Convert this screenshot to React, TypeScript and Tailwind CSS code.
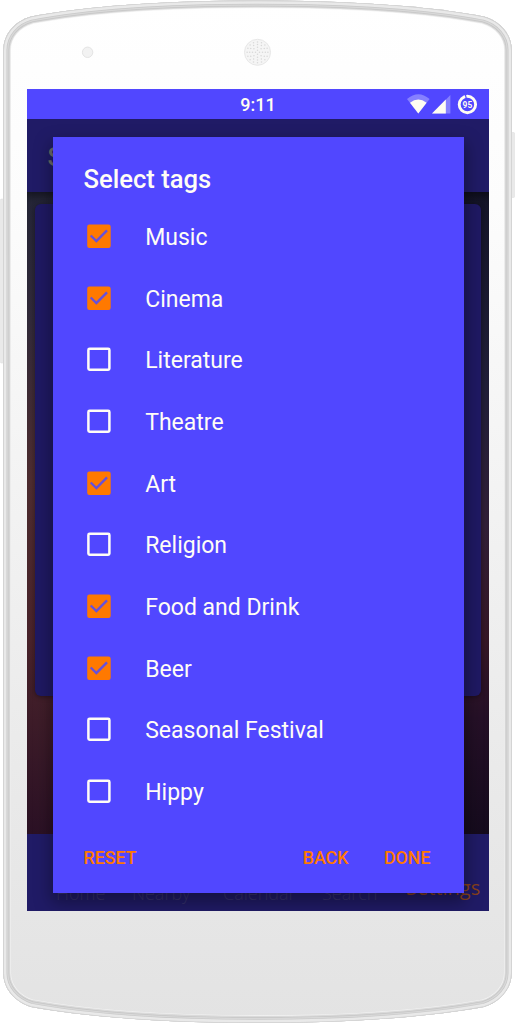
import React from "react";

const BODY =
  "M3.3 50 C3.3 34 15 21 31 16.5 C88 5.5 170 .5 257.5 .5 C345 .5 427 5.5 484 16.5 C500 21 511.7 34 511.7 50 V973 C511.7 989 500 1002 484 1007 C427 1017.5 345 1023 257.5 1023 C170 1023 88 1017.5 31 1007 C15 1002 3.3 989 3.3 973 Z";

const tags = [
  { name: "Music", checked: true },
  { name: "Cinema", checked: true },
  { name: "Literature", checked: false },
  { name: "Theatre", checked: false },
  { name: "Art", checked: true },
  { name: "Religion", checked: false },
  { name: "Food and Drink", checked: true },
  { name: "Beer", checked: true },
  { name: "Seasonal Festival", checked: false },
  { name: "Hippy", checked: false },
];

const speakerHoles = [
  { r: 2, n: 4 },
  { r: 5, n: 8 },
  { r: 7.8, n: 12 },
  { r: 10.4, n: 16 },
].flatMap(({ r, n }) =>
  Array.from({ length: n }, (_, i) => ({
    x: 257.5 + r * Math.cos((i * 2 * Math.PI) / n),
    y: 52.3 + r * Math.sin((i * 2 * Math.PI) / n),
  }))
);

function PhoneBody() {
  return (
    <svg className="absolute inset-0" width="515" height="1024" viewBox="0 0 515 1024">
      <defs>
        <linearGradient id="face" x1="0" y1="0" x2="0" y2="1024" gradientUnits="userSpaceOnUse">
          <stop offset="0" stopColor="#ffffff" />
          <stop offset=".2" stopColor="#fcfcfc" />
          <stop offset=".78" stopColor="#e9e9e9" />
          <stop offset="1" stopColor="#e3e3e3" />
        </linearGradient>
        <clipPath id="edge">
          <path d={BODY} />
        </clipPath>
      </defs>
      <rect x="0.4" y="199" width="5" height="164" rx="1" fill="#e9e9e9" stroke="#dddddd" strokeWidth=".5" />
      <rect x="509" y="132.5" width="5.6" height="65" rx="1" fill="#e9e9e9" stroke="#dddddd" strokeWidth=".5" />
      <path d={BODY} fill="url(#face)" />
      <g clipPath="url(#edge)" fill="none">
        <path d={BODY} stroke="#f4f4f4" strokeWidth="15.4" />
        <path d={BODY} stroke="#dadada" strokeWidth="14" />
        <path d={BODY} stroke="#c6c6c6" strokeWidth="11.8" />
        <path d={BODY} stroke="#d8d8d8" strokeWidth="10.4" />
        <path d={BODY} stroke="#c9c9c9" strokeWidth="7.8" />
        <path d={BODY} stroke="#e9e9e9" strokeWidth="6.4" />
        <path d={BODY} stroke="#cfcfcf" strokeWidth="1.4" />
      </g>
      <circle cx="87.6" cy="52.3" r="5.2" fill="#f2f2f2" stroke="#e4e4e4" />
      <circle cx="257.5" cy="52.3" r="13" fill="#f5f5f5" stroke="#e7e7e7" />
      {speakerHoles.map((h, i) => (
        <circle key={i} cx={h.x} cy={h.y} r=".75" fill="#d8d8d8" />
      ))}
    </svg>
  );
}

function StatusBar() {
  return (
    <div className="relative flex h-[30px] shrink-0 items-center justify-end bg-[#5147ff] pr-[10px] text-[#fffdf2]">
      <span className="absolute inset-x-0 top-[4px] text-center text-[18px] leading-6 font-medium">9:11</span>
      <svg width="72" height="22" viewBox="0 0 72 22">
        <path d="M0 6 Q11.3 -3.6 22.6 6 L11.3 20.5 Z" fill="#8680ff" />
        <path d="M3 9.8 Q11.3 3 19.6 9.8 L11.3 20.5 Z" fill="#fffdf2" />
        <path d="M25 20.5 L43.4 2 V20.5 Z" fill="#8680ff" />
        <path d="M25 20.5 L38.8 6.5 V20.5 Z" fill="#fffdf2" />
        <circle cx="60.4" cy="11.5" r="8.2" fill="none" stroke="#fffdf2" strokeWidth="2.9" />
        <path d="M58.2 1 L59.3 5.5" stroke="#5147ff" strokeWidth="1.2" />
        <text x="60.4" y="15" fontSize="9.5" fontWeight="700" textLength="9.6" lengthAdjust="spacingAndGlyphs" textAnchor="middle" fill="#fffdf2">95</text>
      </svg>
    </div>
  );
}

function Checkbox({ checked }: { checked: boolean }) {
  return (
    <svg className="shrink-0" width="24" height="24" viewBox="0 0 24 24">
      {checked ? (
        <>
          <rect x="0.2" y="0.5" width="23.5" height="23.4" rx="2.2" fill="#ff7900" />
          <path d="M3.7 11.5 L9.4 17.1 L20 6.4" fill="none" stroke="#6651dc" strokeWidth="2.4" />
        </>
      ) : (
        <rect x="1.4" y="1.7" width="21" height="21" rx="1.2" fill="none" stroke="#fffdf6" strokeWidth="2.5" />
      )}
    </svg>
  );
}

function TagDialog() {
  return (
    <div className="absolute top-[48px] left-[26px] flex h-[756px] w-[410.5px] flex-col bg-[#5147ff] text-[#fffdf6] shadow-[0_8px_16px_2px_rgba(0,0,0,0.35)]">
      <h2 className="h-[68.3px] pt-[26px] pl-[30.5px] text-[25.6px] leading-[32px] font-medium">Select tags</h2>
      <ul>
        {tags.map((tag) => (
          <li key={tag.name} className="flex h-[61.65px] items-center pl-[34px]">
            <Checkbox checked={tag.checked} />
            <span className="pt-[4px] pl-[34.2px] text-[23px] leading-7">{tag.name}</span>
          </li>
        ))}
      </ul>
      <div className="flex items-center pt-[22.4px] pl-[30.5px] text-[17.8px] leading-7 font-medium text-[#ff7900]">
        <button className="mr-auto">RESET</button>
        <button>BACK</button>
        <button className="mr-[33px] ml-[35.5px]">DONE</button>
      </div>
    </div>
  );
}

export default function App() {
  return (
    <div className="relative h-[1024px] w-[515px] overflow-hidden bg-white pt-[89px] pl-[27px] font-[Roboto,sans-serif]">
      <PhoneBody />
      <main className="relative flex h-[822px] w-[462px] flex-col overflow-hidden">
        <StatusBar />
        <header className="flex h-[73px] shrink-0 items-center bg-[#201b66] pt-[4px] pl-[20.5px] text-[25px] font-medium text-[#6a6a68]">S</header>
        <div className="flex flex-1 bg-[linear-gradient(180deg,#252638_0%,#332b3b_20%,#502e32_45%,#4b242c_70%,#2b1125_100%)]">
          <div className="flex-1 bg-[linear-gradient(180deg,#151529_0%,#22203a_30%,#332039_52%,#371827_70%,#251027_82%,#150b1d_100%)] [mask-image:linear-gradient(90deg,transparent_4%,black_96%)]" />
          <div className="relative -ml-[462px] w-[462px] shrink-0 px-2 pt-[12px] shadow-[inset_0_8px_8px_-4px_rgba(0,0,0,0.45)]">
            <div className="h-[492px] rounded-md bg-[#1f1963] shadow-[0_1px_5px_rgba(0,0,0,0.4)]" />
          </div>
        </div>
        <nav className="flex h-[77px] shrink-0 items-end bg-[#201b66] pb-[3px] pl-[29px] font-['Open_Sans',sans-serif] text-[18px] leading-[30px] font-light text-[#37326c]">
          <span className="w-[76px]">Home</span>
          <span className="w-[91px]">Nearby</span>
          <span className="w-[99px]">Calendar</span>
          <span className="w-[84px]">Search</span>
          <span className="mb-[5px] text-[20px] font-normal text-[#87401b]">Settings</span>
        </nav>
        <TagDialog />
      </main>
    </div>
  );
}
